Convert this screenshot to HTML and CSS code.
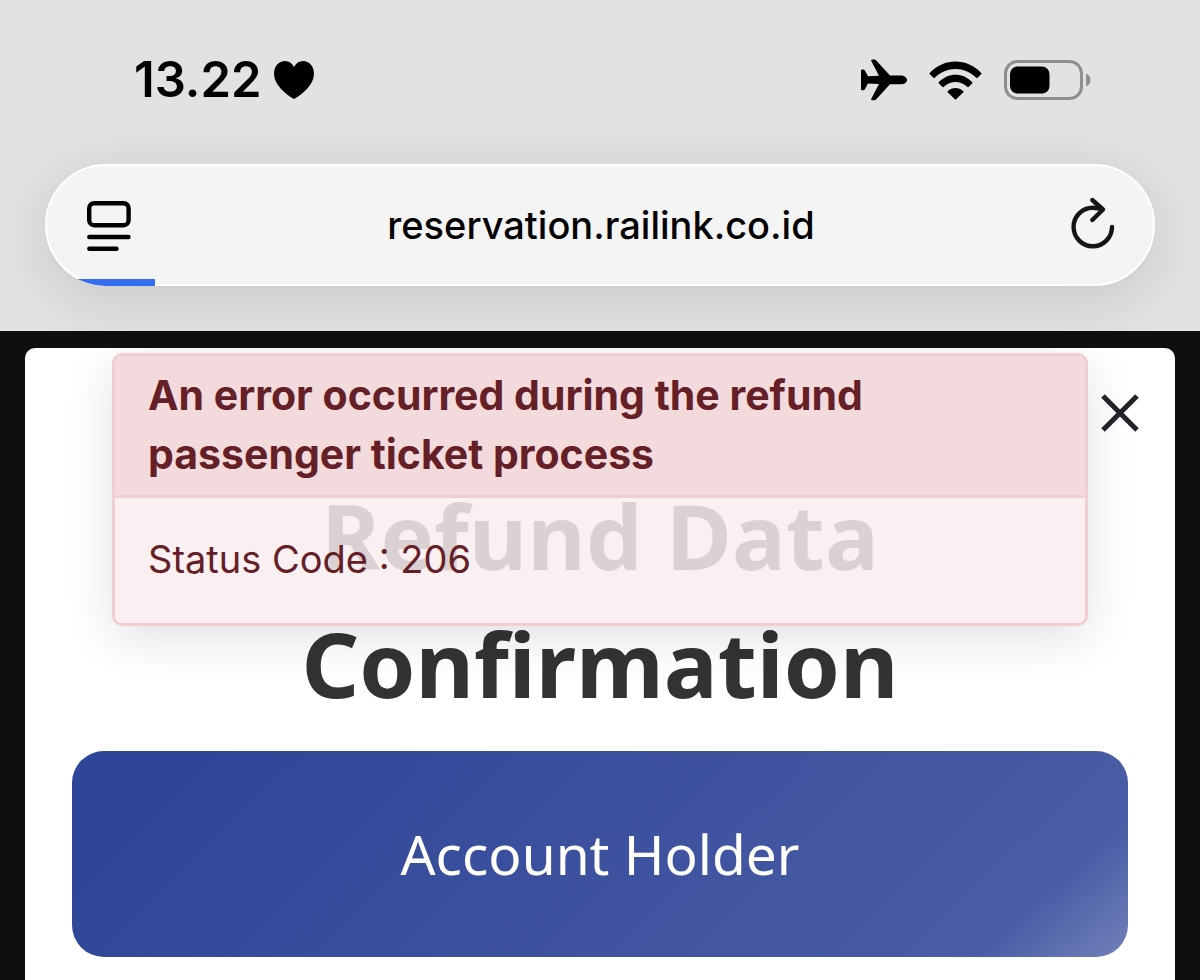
FILE: index.html
```html
<!DOCTYPE html>
<html lang="en">
<head>
<meta charset="utf-8">
<meta name="viewport" content="width=device-width, initial-scale=1">
<title>Refund Data Confirmation</title>
<link rel="stylesheet" href="styles.css">
</head>
<body>
<header class="browser">
  <div class="status">
    <div class="status-group">
      <time class="clock">13.22</time>
      <svg class="heart" viewBox="0 0 40 38" aria-hidden="true"><path d="M20 38C11 33 0 23 0 13C0 5 5 0 11 0C15 0 18 2 20 6C22 2 25 0 29 0C35 0 40 5 40 13C40 23 29 33 20 38Z"/></svg>
    </div>
    <div class="status-group indicators">
      <svg class="plane" viewBox="0 0 46 42" aria-hidden="true"><path d="M0 11.500Q0 10.500 1 10.500H2.500Q3.200 10.500 3.700 11.200L7 17.300L18 16.800L10.300 2Q9.700 .5 11.200 .5H13.500Q14.300 .5 15 1.300L29 16.500H39.500C43 16.500 46 18.400 46 20.900C46 23.400 43 25.300 39.500 25.300H29L15 40.500Q14.300 41.300 13.500 41.300H11.200Q9.700 41.300 10.300 39.800L18 25L7 24.500L3.700 30.600Q3.200 31.300 2.500 31.300H1Q0 31.300 0 30.300Z"/></svg>
      <svg class="wifi" viewBox="0 0 54 40" aria-hidden="true"><path d="M.6 12.300C15-3.500 39-3.500 53.400 12.300Q54 13 53.300 13.700L49.600 17.300Q49 17.900 48.300 17.200C36.500 5.300 17.500 5.300 5.700 17.200Q5 17.900 4.400 17.300L.7 13.700Q0 13 .6 12.300Z"/><path d="M9.900 21.600C19.300 11.500 34.700 11.500 44.100 21.600Q44.700 22.300 44 23L40.300 26.600Q39.700 27.200 39 26.500C32.300 20 21.700 20 15 26.500Q14.300 27.200 13.700 26.600L10 23Q9.300 22.300 9.900 21.600Z"/><path d="M19 30.900C23.500 26.700 30.500 26.700 35 30.900Q35.600 31.500 35 32.100L27.700 39.300Q27 39.900 26.300 39.300L19 32.100Q18.400 31.500 19 30.900Z"/></svg>
      <svg class="battery" viewBox="0 0 87 40" aria-hidden="true"><rect class="shell" x="1.500" y="1.500" width="76" height="37" rx="12"/><rect x="6" y="6.500" width="39.500" height="27" rx="7.500"/><path class="tip" d="M82 13.500Q86.500 15.500 86.500 20Q86.500 24.500 82 26.500Z"/></svg>
    </div>
  </div>
  <div class="address">
    <button class="tool" type="button" aria-label="Page menu">
      <svg viewBox="0 0 44 52" aria-hidden="true"><rect x="2.200" y="4.200" width="39.400" height="22" rx="5"/><path d="M2.300 38H41.500M2.300 49.700H29.500"/></svg>
    </button>
    <a class="url" href="#">reservation.railink.co.id</a>
    <button class="tool" type="button" aria-label="Reload">
      <svg class="reload" viewBox="0 -3 44 52" aria-hidden="true"><path d="M41 25A19.200 19.200 0 1 1 21.800 5.800Q26 5.800 32 7.500M21.300-2L32 7.500L21.300 18"/></svg>
    </button>
    <span class="progress"></span>
  </div>
</header>
<main class="backdrop">
  <section class="dialog">
    <button class="close" type="button" aria-label="Close"><svg viewBox="0 0 38 38" aria-hidden="true"><path d="M2 2L36 36M36 2L2 36"/></svg></button>
    <h1 class="title">Refund Data<br>Confirmation</h1>
    <h2 class="holder">Account Holder</h2>
    <div class="toast" role="alert">
      <strong class="toast-head">An error occurred during the refund passenger ticket process</strong>
      <p class="toast-body">Status Code : 206</p>
    </div>
  </section>
</main>
</body>
</html>
```
FILE: styles.css
```css
* { box-sizing: border-box; }
body {
  margin: 0;
  min-height: 100vh;
  display: flex;
  flex-direction: column;
  background: #0e0f0f;
  font-family: Inter, "Liberation Sans", sans-serif;
}
button { border: 0; padding: 0; background: none; cursor: pointer; }
svg { display: block; overflow: visible; }

.browser {
  padding: 50px 45px 45px;
  background: #e2e2e2;
  overflow: hidden;
}
.status {
  display: flex;
  justify-content: space-between;
  padding: 0 64px 0 89px;
  height: 60px;
}
.status-group { display: flex; align-items: center; gap: 12px; }
.clock { font-size: 49px; font-weight: 600; line-height: 60px; }
.heart { width: 40px; height: 38px; }
.indicators { gap: 22px; }
.plane { width: 46px; height: 42px; }
.wifi { width: 53px; height: 39px; }
.battery { width: 87px; height: 40px; }
.shell { fill: none; stroke: #8e8e8e; stroke-width: 3; }
.tip { fill: #8e8e8e; }

.address {
  position: relative;
  display: flex;
  align-items: center;
  justify-content: space-between;
  height: 122px;
  margin-top: 54px;
  padding: 0 38px 0 40px;
  border: 2px solid #fff;
  border-radius: 61px;
  background: #f4f4f4;
  box-shadow: 0 12px 60px rgba(0, 0, 0, .12);
}
.tool svg { width: 44px; height: 52px; fill: none; stroke: #000; stroke-width: 4.4; stroke-linecap: round; stroke-linejoin: round; }
.tool .reload { stroke: #151515; }
.url { color: #000; font-size: 38px; font-weight: 500; text-decoration: none; }
.progress {
  position: absolute;
  inset: -2px;
  border-radius: 61px;
  background: linear-gradient(#356df0, #356df0) left bottom / 110px 7px no-repeat;
}

.backdrop { flex: 1; display: flex; padding: 17px 25px 0; }
.dialog {
  position: relative;
  flex: 1;
  padding: 123px 47px 22px;
  border-radius: 10px 10px 0 0;
  background: #fff;
  overflow: hidden;
}
.close { position: absolute; top: 46px; right: 36px; }
.close svg { width: 38px; height: 38px; fill: none; stroke: #202428; stroke-width: 5; }
.title {
  margin: 0 0 24px;
  color: #333;
  font: 700 90px/128px "Noto Sans", sans-serif;
  text-align: center;
}
.holder {
  margin: 0;
  padding: 63px 24px;
  border-radius: 32px;
  background:
    linear-gradient(139deg, rgba(255, 255, 255, 0) 88%, rgba(255, 255, 255, .22) 100%),
    linear-gradient(135deg, #2f4597 10%, #4a5da6 90%);
  color: #fff;
  font: 400 55px/80px "Noto Sans", sans-serif;
  text-align: center;
}
.toast {
  position: absolute;
  inset: 5px 87px auto;
  border: 3px solid #efcdd1;
  border-radius: 10px;
  color: #652027;
  font-size: 41px;
  line-height: 59px;
  box-shadow: 0 12px 48px rgba(0, 0, 0, .12);
}
.toast-head {
  display: block;
  padding: 10px 33px 11px;
  border-bottom: 3px solid #efcdd1;
  border-radius: 7px 7px 0 0;
  background: #f3dadd;
  font-weight: 700;
}
.toast-body {
  margin: 0;
  padding: 32px 33px 34px;
  border-radius: 0 0 7px 7px;
  background: rgba(249, 236, 239, .85);
  font-size: 38px;
}
```
